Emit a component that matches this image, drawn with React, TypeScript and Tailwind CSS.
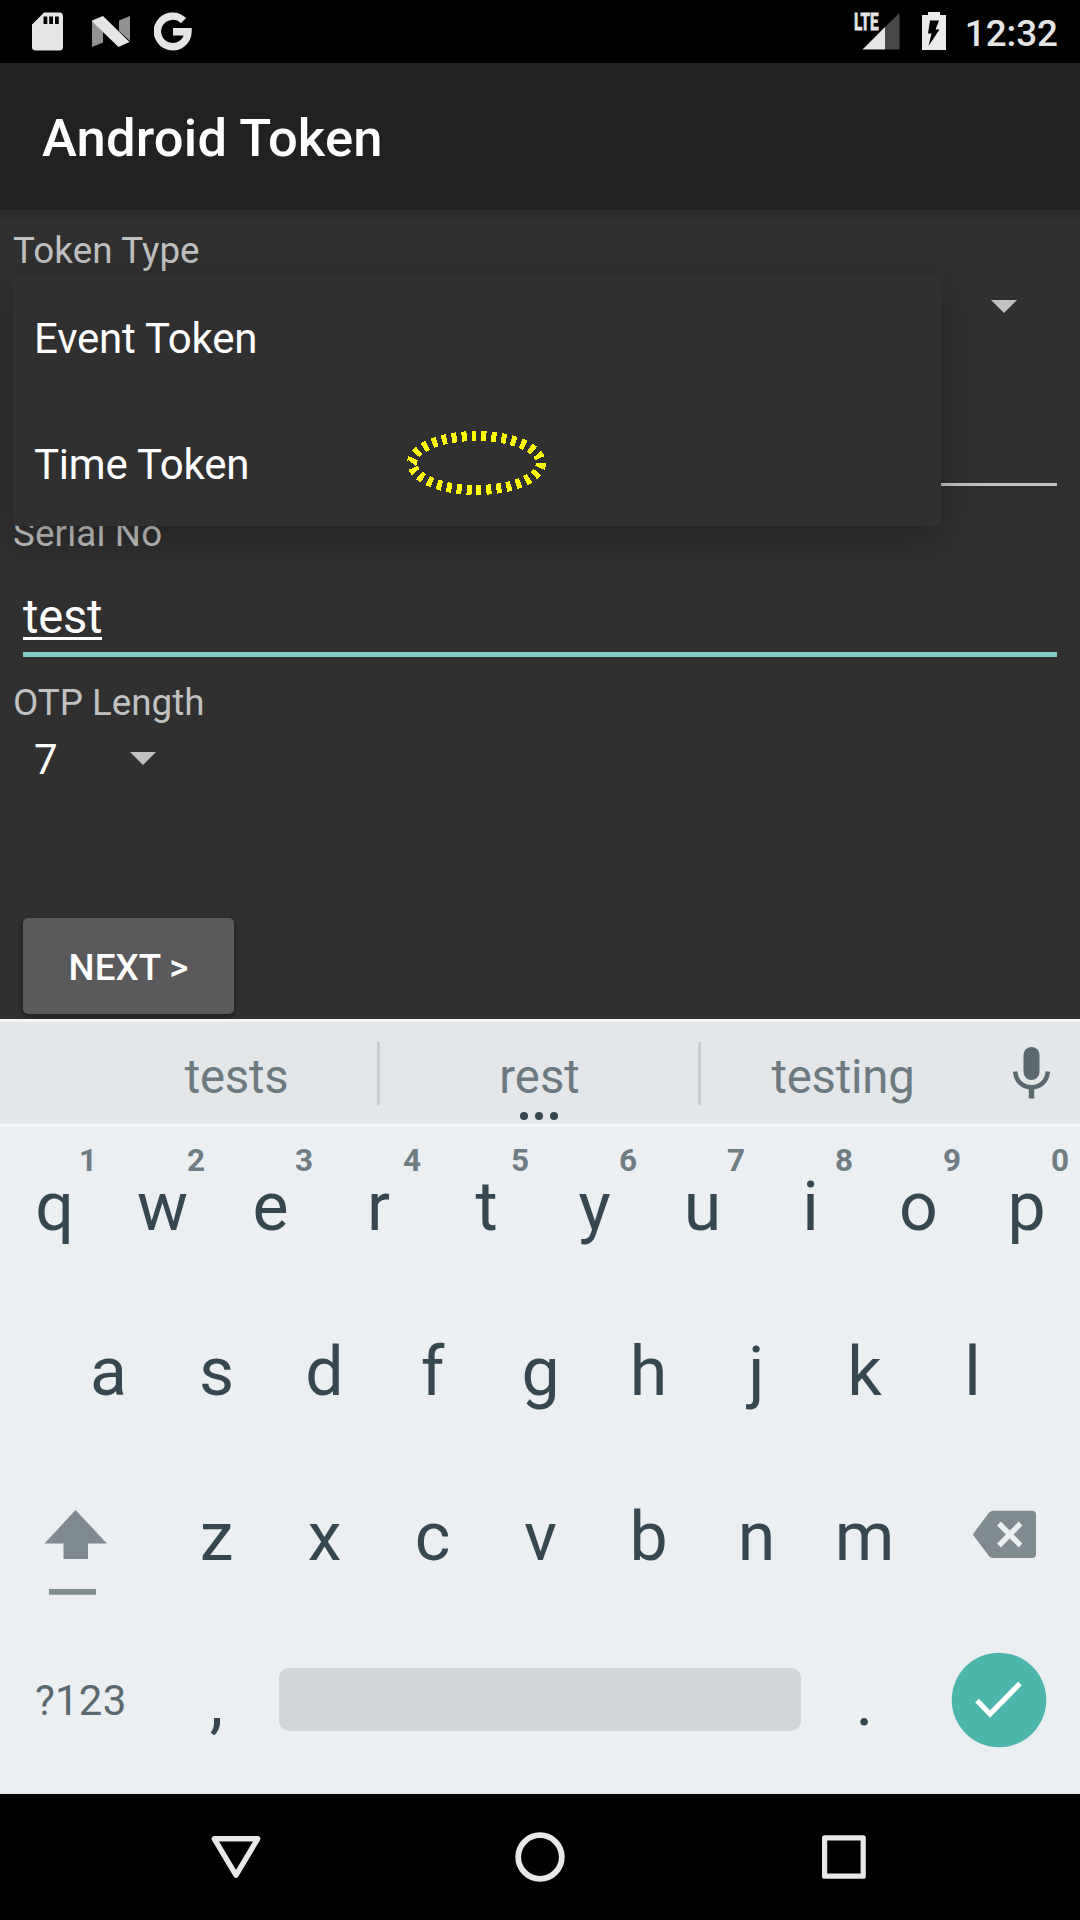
import React from "react";

const topRow = [
  ["q", "1"], ["w", "2"], ["e", "3"], ["r", "4"], ["t", "5"],
  ["y", "6"], ["u", "7"], ["i", "8"], ["o", "9"], ["p", "0"],
];
const homeRow = ["a", "s", "d", "f", "g", "h", "j", "k", "l"];
const bottomRow = ["z", "x", "c", "v", "b", "n", "m"];

function Key({ label, hint }: { label: string; hint?: string }) {
  return (
    <div className="relative flex h-[165px] w-[108px] shrink-0 items-center justify-center pt-[4px] pl-[1px] text-[68px] leading-[80px] text-[#37474f]">
      {label}
      {hint && (
        <span className="absolute top-[20px] right-[11px] text-[31.5px] leading-[37px] font-bold text-[#6f7c82]">
          {hint}
        </span>
      )}
    </div>
  );
}

function StatusBar() {
  return (
    <header className="flex h-[63px] items-start justify-between bg-black pr-[22px] pl-[32px]">
      <div className="flex pt-[12px]">
        <svg width="31" height="39" viewBox="0 0 31 39">
          <path
            fillRule="evenodd"
            fill="#e5e5e5"
            d="M12 .5H27.5Q31 .5 31 4V35Q31 38.5 27.5 38.5H3.500Q0 38.500 0 35V12.500ZM11.500 4.500V12H15.300V4.500ZM17.200 4.500V12H21V4.500ZM23 4.500V12H26.800V4.500Z"
          />
        </svg>
        <svg className="ml-[29px]" width="38" height="39" viewBox="0 0 38 39">
          <path fill="#929292" d="M0 9L11 20V30.500L0 35ZM38 4V29L27 19V8.500Z" />
          <path fill="#e5e5e5" d="M0 8.500L11 4L37.500 30L26.500 35L0 9.500Z" />
        </svg>
        <svg className="ml-[24px]" width="39" height="39" viewBox="0 0 39 39">
          <path
            fill="none"
            stroke="#e5e5e5"
            strokeWidth="7.4"
            d="M29.500 8.600A15.300 15.300 0 1 0 34 19.700H19"
          />
        </svg>
      </div>
      <div className="flex">
        <svg className="mt-[2px] overflow-visible" width="48" height="49" viewBox="0 -10 48 49">
          <path fill="#484848" d="M32 15L46.500 1V37.500H32Z" />
          <path fill="#e5e5e5" d="M9.500 37.500L32 15V37.500Z" />
          <text x="1" y="17.500" fontSize="23.500" fontWeight="700" fill="#e5e5e5" stroke="#e5e5e5" strokeWidth="0.800" textLength="24.500" lengthAdjust="spacingAndGlyphs">LTE</text>
        </svg>
        <svg className="mt-[12px] ml-[21px]" width="24" height="38" viewBox="0 0 24 38">
          <path fill="#ebebeb" d="M6 0H18V3H24V38H0V3H6Z" />
          <path fill="#000" d="M8 8.500H17L13.500 17.500H17.500L6.500 34L9.500 21.500H6Z" />
        </svg>
        <span className="mt-[12px] ml-[19px] text-[36.75px] leading-[43px] font-medium text-[#e5e5e5]">12:32</span>
      </div>
    </header>
  );
}

function Caret() {
  return (
    <svg width="26" height="13" viewBox="0 0 26 13">
      <path fill="#c1c1c1" d="M0 0H26L13 13Z" />
    </svg>
  );
}

function TokenForm() {
  return (
    <main className="relative h-[809px] bg-[#303030] bg-linear-to-b from-[#2a2a2a] to-[#303030] to-[12px] px-[13px] pt-[19px]">
      <div className="text-[36.75px] leading-[43px] tracking-[0.1px] text-[#c1c1c1]">Token Type</div>
      <div className="flex h-[69px] items-center justify-end pr-[50px]">
        <Caret />
      </div>
      <div className="mx-[10px] h-[145px] border-b-[3px] border-[#c1c1c1]" />
      <div className="mt-[26px] text-[36.75px] leading-[43px] tracking-[0.15px] text-[#c1c1c1]">Serial No</div>
      <div className="mx-[10px] flex h-[102px] items-start border-b-[5px] border-[#80cbc4] pt-[34px] text-[47.25px] tracking-[-0.3px] text-white">
        <span className="h-[51px] border-b-[3px] border-white leading-[57px]">test</span>
      </div>
      <div className="mt-[24px] text-[36.75px] leading-[43px] text-[#c1c1c1]">OTP Length</div>
      <div className="mt-[11px] flex items-center pl-[21px] text-[42px] leading-[49px] text-white">
        <span className="w-[96px]">7</span>
        <span className="pb-[2px]">
          <Caret />
        </span>
      </div>
      <button className="mt-[134px] ml-[10px] block h-[96px] w-[211px] rounded-[5px] bg-[#5a595b] pt-[2px] text-[36.75px] leading-[43px] font-medium text-white shadow-[0_3px_6px_rgba(0,0,0,0.4)]">
        NEXT &gt;
      </button>

      <div className="absolute top-[64px] left-[13px] h-[252px] w-[928px] rounded-[5px] bg-[#303030] text-[42px] tracking-[-0.2px] text-white shadow-[0_12px_40px_rgba(0,0,0,0.28)]">
        <div className="h-[126px] pl-[21px] leading-[130px]">Event Token</div>
        <div className="h-[126px] pl-[21px] leading-[130px]">Time Token</div>
      </div>
      <svg className="absolute top-[220px] left-[406px]" width="142" height="66" viewBox="0 0 142 66">
        <ellipse
          cx="70.500"
          cy="33"
          rx="64.500"
          ry="27"
          fill="none"
          stroke="#ff0"
          strokeWidth="10"
          pathLength="300"
          strokeDasharray="5 5"
          strokeDashoffset="0"
          shapeRendering="crispEdges"
        />
      </svg>
    </main>
  );
}

function Suggestions() {
  return (
    <div className="relative flex h-[108px] items-center border-y-[3px] border-[#f4f6f7] bg-[#e3e7ea] text-[47.25px] leading-[55px] text-[#6d7a80]">
      <span className="ml-[95px] w-[282px] pt-[8px] pl-[1px] text-center tracking-[-0.2px]">tests</span>
      <span className="mt-[1px] h-[63px] w-[3px] bg-[#c9ced1]" />
      <span className="w-[318px] pt-[8px] pl-[1px] text-center">rest</span>
      <span className="mt-[1px] h-[63px] w-[3px] bg-[#c9ced1]" />
      <span className="w-[282px] pt-[8px] pl-[2px] text-center tracking-[-0.2px]">testing</span>
      <svg className="mb-[1px] ml-[30px]" width="37" height="52" viewBox="0 0 37 52">
        <rect x="10.500" y="0" width="16" height="33" rx="8" fill="#5b696f" />
        <path fill="none" stroke="#5b696f" strokeWidth="4.500" d="M2.200 24.500C3 34 9 40.200 18.500 40.200S34 34 34.800 24.500" />
        <path fill="#5b696f" d="M15.800 40H21.200V51.500H15.800Z" />
      </svg>
      <div className="absolute top-[90px] left-[520px] flex gap-[7px]">
        <i className="size-2 rounded-full bg-[#37474f]" />
        <i className="size-2 rounded-full bg-[#37474f]" />
        <i className="size-2 rounded-full bg-[#37474f]" />
      </div>
    </div>
  );
}

function Keyboard() {
  return (
    <section className="h-[775px] bg-[#ebeff2]">
      <Suggestions />
      <div className="-mt-[5px] flex">
        {topRow.map(([label, hint]) => (
          <Key key={label} label={label} hint={hint} />
        ))}
      </div>
      <div className="flex justify-center">
        {homeRow.map((label) => (
          <Key key={label} label={label} />
        ))}
      </div>
      <div className="flex">
        <div className="w-[162px] pt-[58px] pl-[44px]">
          <svg width="64" height="86" viewBox="0 0 64 86" fill="#808b8f">
            <path d="M31.500 0L63 33.500H44V49H19.500V33.500H.500Z" />
            <path d="M5 79H52V84.700H5Z" />
          </svg>
        </div>
        {bottomRow.map((label) => (
          <Key key={label} label={label} />
        ))}
        <div className="w-[162px] pt-[58px] pl-[54px]">
          <svg width="65" height="49" viewBox="0 0 65 49">
            <path fill="#808b8f" d="M21 .700H60Q64 .700 64 4.700V44Q64 48 60 48H21Q18 48 16.500 45.500L.700 24.400L16.500 3.200Q18 .700 21 .700Z" />
            <path stroke="#ebeff2" strokeWidth="5.400" d="M27 13.500L48.500 35.500M48.500 13.500L27 35.500" />
          </svg>
        </div>
      </div>
      <div className="flex h-[165px] items-center">
        <span className="w-[162px] pt-[1px] pl-[35px] text-[42px] leading-[49px] tracking-[0.2px] text-[#5b696f]">?123</span>
        <Key label="," />
        <span className="ml-[9px] h-[63px] w-[522px] rounded-[10px] bg-[#d1d6d9]" />
        <span className="w-[9px]" />
        <Key label="." />
        <svg className="ml-[33px]" width="96" height="96" viewBox="0 0 96 96">
          <circle cx="48" cy="48" r="47.300" fill="#4db6ac" />
          <path fill="none" stroke="#fff" strokeWidth="5.200" d="M26 48.500L39 62L69 31.500" />
        </svg>
      </div>
    </section>
  );
}

function NavBar() {
  return (
    <nav className="flex h-[126px] items-center bg-black px-[84px]">
      <div className="flex w-[304px] justify-center">
        <svg width="50" height="50" viewBox="0 0 50 50" fill="none" stroke="#e8e8e8" strokeWidth="5.400" strokeLinejoin="round">
          <path d="M3.300 6.800H46.700L25 43.200Z" />
        </svg>
      </div>
      <div className="flex w-[304px] justify-center">
        <svg width="50" height="50" viewBox="0 0 50 50" fill="none" stroke="#e8e8e8" strokeWidth="5.800">
          <circle cx="25" cy="25" r="21.800" />
        </svg>
      </div>
      <div className="flex w-[304px] justify-center">
        <svg width="50" height="50" viewBox="0 0 50 50" fill="none" stroke="#e8e8e8" strokeWidth="5.200" strokeLinejoin="round">
          <rect x="5.600" y="5.800" width="38.600" height="38.400" />
        </svg>
      </div>
    </nav>
  );
}

export default function App() {
  return (
    <div className="h-[1920px] w-[1080px] overflow-hidden bg-black font-['Roboto',sans-serif]">
      <StatusBar />
      <div className="h-[147px] bg-[#212121] pt-[44px] pl-[42px] text-[52.5px] leading-[62px] font-medium tracking-[0.2px] text-white">
        Android Token
      </div>
      <TokenForm />
      <Keyboard />
      <NavBar />
    </div>
  );
}
